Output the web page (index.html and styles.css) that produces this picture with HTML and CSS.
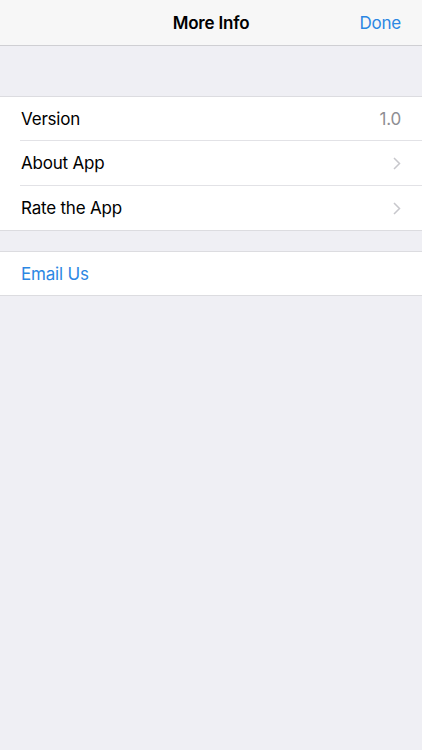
FILE: index.html
```html
<!DOCTYPE html>
<html>
<head>
<meta charset="utf-8">
<link rel="stylesheet" href="styles.css">
</head>
<body>
<header class="navbar">
  <div class="nav-side"></div>
  <div class="nav-title">More Info</div>
  <div class="nav-side nav-right"><span class="nav-btn">Done</span></div>
</header>
<main class="content">
  <section class="group group-first">
    <div class="row row-short">
      <span class="label">Version</span>
      <span class="detail">1.0</span>
    </div>
    <div class="row">
      <span class="label">About App</span>
      <svg class="chevron" width="8" height="13" viewBox="0 0 8 13"><path d="M1 1l5.5 5.5L1 12" fill="none" stroke="#c7c7cc" stroke-width="1.5"/></svg>
    </div>
    <div class="row">
      <span class="label">Rate the App</span>
      <svg class="chevron" width="8" height="13" viewBox="0 0 8 13"><path d="M1 1l5.5 5.5L1 12" fill="none" stroke="#c7c7cc" stroke-width="1.5"/></svg>
    </div>
  </section>
  <section class="group group-second">
    <div class="row row-short">
      <span class="label link">Email Us</span>
    </div>
  </section>
</main>
</body>
</html>
```

FILE: styles.css
```css
html, body {
  margin: 0;
  padding: 0;
  background: #efeff4;
  font-family: Inter, "Noto Sans", "Liberation Sans", sans-serif;
  -webkit-font-smoothing: antialiased;
}
body {
  width: 422px;
  height: 750px;
  overflow: hidden;
}
.navbar {
  height: 45px;
  background: #f7f7f7;
  border-bottom: 1px solid #cfcfd3;
  display: flex;
  align-items: center;
  padding: 0 21px;
}
.nav-side {
  flex: 1;
  display: flex;
}
.nav-right {
  justify-content: flex-end;
}
.nav-title {
  font-size: 17px;
  font-weight: 600;
  color: #000;
  letter-spacing: -0.2px;
}
.nav-btn {
  font-size: 17px;
  color: #2b87e3;
  letter-spacing: -0.2px;
}
.content {
  display: flex;
  flex-direction: column;
}
.group {
  background: #fff;
  border-top: 1px solid #dcdce0;
  border-bottom: 1px solid #dcdce0;
  padding-left: 20px;
}
.group-first {
  margin-top: 50px;
}
.group-second {
  margin-top: 20px;
}
.row {
  height: 44px;
  display: flex;
  align-items: center;
  justify-content: space-between;
  padding-right: 21px;
  padding-left: 1px;
  border-bottom: 1px solid #e2e2e6;
}
.row-short {
  height: 43px;
}
.row:last-child {
  border-bottom: none;
}
.label {
  font-size: 17px;
  color: #000;
  letter-spacing: -0.2px;
}
.link {
  color: #2b87e3;
}
.detail {
  font-size: 17px;
  color: #8e8e93;
  letter-spacing: -0.2px;
}
.chevron {
  display: block;
}
```
